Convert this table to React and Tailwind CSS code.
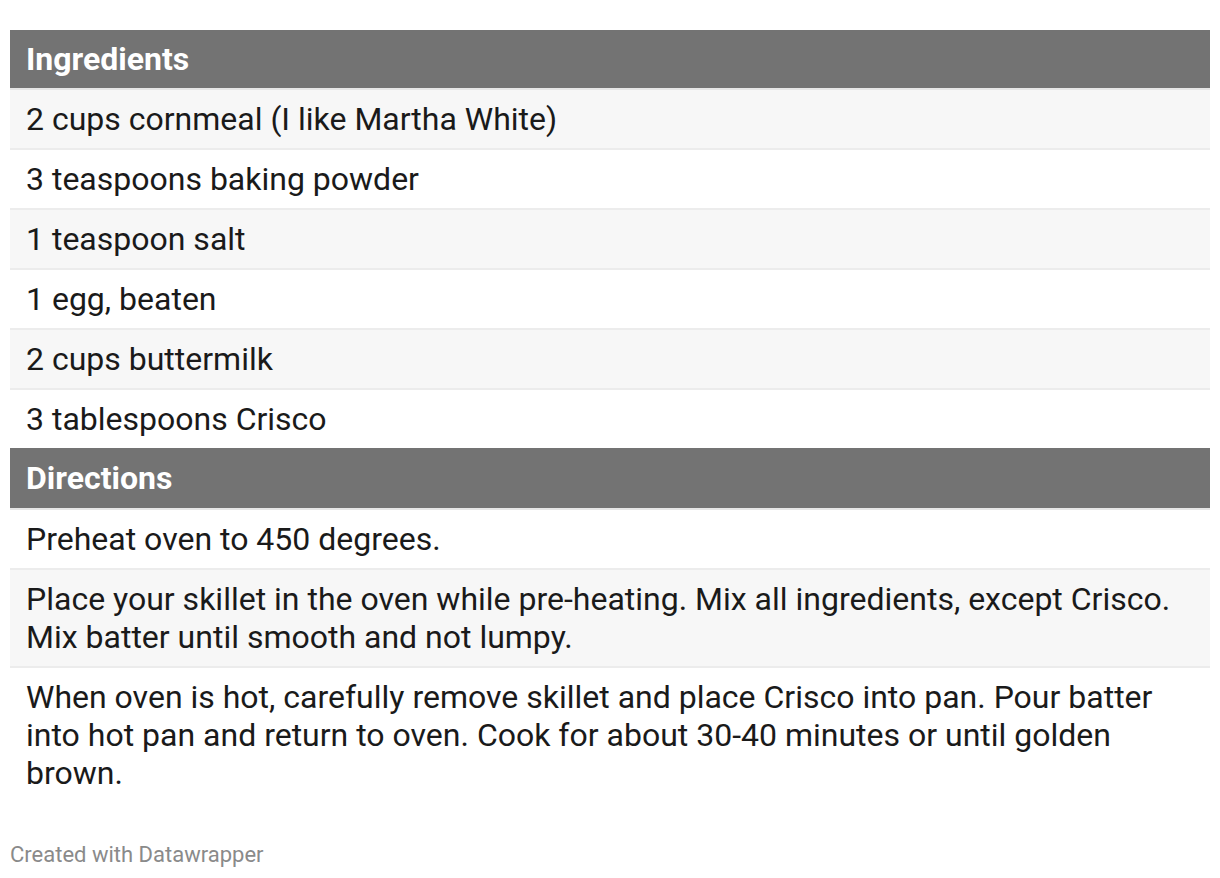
export default function App() {
  const font = { fontFamily: "Roboto, 'Liberation Sans', sans-serif" };
  const ingredients = [
    "2 cups cornmeal (I like Martha White)",
    "3 teaspoons baking powder",
    "1 teaspoon salt",
    "1 egg, beaten",
    "2 cups buttermilk",
    "3 tablespoons Crisco",
  ];
  const directions = [
    "Preheat oven to 450 degrees.",
    "Place your skillet in the oven while pre-heating. Mix all ingredients, except Crisco. Mix batter until smooth and not lumpy.",
    "When oven is hot, carefully remove skillet and place Crisco into pan. Pour batter into hot pan and return to oven. Cook for about 30-40 minutes or until golden brown.",
  ];
  return (
    <div className="w-[1220px] h-[878px] bg-white px-[10px] pt-[30px]" style={font}>
      <div className="flex flex-col">
        <div className="h-[60px] bg-[#737373] border-b-2 border-[#e6e6e6] px-4 py-[10px] text-[32px] leading-[38px] font-bold text-white">
          Ingredients
        </div>
        {ingredients.map((t, i) => (
          <div
            key={t}
            className={
              "px-4 py-[10px] text-[32px] leading-[38px] text-[#1a1a1a] " +
              (i % 2 === 0 ? "bg-[#f7f7f7] " : "bg-white ") +
              (i < ingredients.length - 1 ? "border-b-2 border-[#ececec]" : "")
            }
          >
            {t}
          </div>
        ))}
        <div className="h-[62px] bg-[#737373] border-b-2 border-[#e6e6e6] px-4 py-[11px] text-[32px] leading-[38px] font-bold text-white">
          Directions
        </div>
        {directions.map((t, i) => (
          <div
            key={t}
            className={
              "px-4 py-[10px] text-[32px] leading-[38px] text-[#1a1a1a] " +
              (i % 2 === 1 ? "bg-[#f7f7f7] " : "bg-white ") +
              (i < directions.length - 1 ? "border-b-2 border-[#ececec]" : "")
            }
          >
            {t}
          </div>
        ))}
      </div>
      <div className="mt-[40px] text-[22px] leading-[26px] text-[#8a8a8a]">Created with Datawrapper</div>
    </div>
  );
}
